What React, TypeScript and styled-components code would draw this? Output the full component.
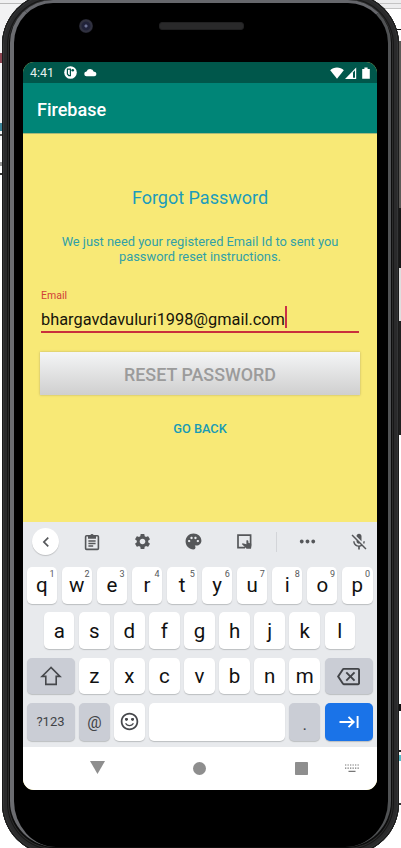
import React from 'react';
import styled, { createGlobalStyle, css } from 'styled-components';
import {
  MdSettings,
  MdPalette,
  MdMoreHoriz,
  MdMicOff,
  MdOutlineBackspace,
  MdSentimentSatisfiedAlt,
  MdChevronLeft,
} from 'react-icons/md';

const GlobalStyle = createGlobalStyle`
  * { box-sizing: border-box; }
  html, body { margin: 0; padding: 0; height: 100%; overflow: hidden; background: #fff; }
  body { font-family: Roboto, "Liberation Sans", sans-serif; }
`;

const Desktop = styled.main`
  position: relative;
  width: 401px;
  height: 848px;
  overflow: hidden;
  background: linear-gradient(#f0f0f1 0 3px, #b9b9b9 3px 4px, #f2f2f3 4px 100%) 0 0 / 200px 140px no-repeat,
    linear-gradient(#ededee 0 3px, #c4c4c4 3px 4px, #ededee 4px 8px, #c4c4c4 8px 9px, #fff 9px) 201px 0 / 200px 140px no-repeat,
    #fff;
`;

const SideButton = styled.span<{ $top: number; $height: number; $tone: string }>`
  position: absolute;
  right: 0;
  width: 4px;
  top: ${(p) => p.$top}px;
  height: ${(p) => p.$height}px;
  background: ${(p) => p.$tone};
`;

const EdgeMark = styled.span<{ $top: number; $height: number; $tone: string }>`
  position: absolute;
  left: 0;
  width: 6px;
  top: ${(p) => p.$top}px;
  height: ${(p) => p.$height}px;
  background: ${(p) => p.$tone};
`;

const Shell = styled.div`
  position: relative;
  width: 397px;
  height: 862px;
  margin: -7px 0 0 2px;
  padding: 7px 8px 8px;
  border-radius: 52px;
  background: #0c0c0c;
  box-shadow: inset 0 0 0 1px #1b1b1b, inset 0 0 0 2px #343536, inset 0 0 0 5px #2a2a2b,
    inset 0 0 0 6px #171717, inset 0 0 0 7px #2c2c2c;
`;

const Glass = styled.div`
  height: 100%;
  border-style: solid;
  border-width: 3px 3px 0 4px;
  border-color: #66676c #505254 #000 #6b6c70;
  border-radius: 43px 43px 46px 46px;
  background: #000;
  padding: 0 11px 0 9px;
  display: flex;
  flex-direction: column;
`;

const Forehead = styled.div`
  height: 59px;
  flex: none;
  display: flex;
  align-items: flex-start;
  padding: 16px 0 0 56px;
`;

const Camera = styled.span`
  width: 14px;
  height: 14px;
  border-radius: 50%;
  background: radial-gradient(circle, #6c7295 0 1px, #202239 2px 4px, #30313f 5px 6px, #1d1d27 7px);
`;

const Speaker = styled.span`
  width: 85px;
  height: 8px;
  margin: 3px 0 0 66px;
  border-radius: 3px;
  background: #29292a;
  border: 1px solid #202021;
`;

const Screen = styled.section`
  width: 354px;
  height: 728px;
  flex: none;
  border-radius: 11px;
  overflow: hidden;
  display: flex;
  flex-direction: column;
  background: #f8e976;
`;

const StatusBar = styled.header`
  height: 21px;
  flex: none;
  display: flex;
  align-items: center;
  padding: 0 7px 0 7px;
  background: #00574b;
  color: #fff;
`;

const Clock = styled.time`
  font-size: 12.5px;
  width: 34px;
  color: #e6efed;
  line-height: 21px;
`;

const StatusGlyph = styled.svg<{ $gap?: number }>`
  display: block;
  flex: none;
  margin-left: ${(p) => p.$gap ?? 0}px;
`;

const Spacer = styled.span`
  flex: 1;
`;

const AppBar = styled.div`
  height: 51px;
  flex: none;
  display: flex;
  align-items: center;
  padding: 3px 14px 0;
  background: #008577;
  border-bottom: 1px solid #a8b878;
  color: #fff;
  font-size: 18px;
  font-weight: 500;
`;

const Form = styled.form`
  height: 388px;
  flex: none;
  display: flex;
  flex-direction: column;
  padding: 53px 17px 0;
`;

const Title = styled.h1`
  margin: 0;
  font-size: 18px;
  line-height: 22px;
  font-weight: 400;
  text-align: center;
  color: #1c9cbb;
`;

const Hint = styled.p`
  margin: 25px 0 0;
  font-size: 12.85px;
  line-height: 15px;
  text-align: center;
  color: #30a0a8;
`;

const Label = styled.label`
  margin: 25px 0 0 1px;
  font-size: 10.5px;
  line-height: 13px;
  color: #d04038;
`;

const Field = styled.div`
  height: 31px;
  margin: 0 1px;
  display: flex;
  align-items: center;
  border-bottom: 2px solid #c9303c;
  font-size: 16.35px;
  line-height: 22px;
  padding-top: 7px;
  color: #16140a;
`;

const Caret = styled.span`
  width: 2px;
  height: 22px;
  margin-top: -6px;
  background: #cb3047;
`;

const ResetButton = styled.button`
  height: 43px;
  margin: 19px 0 0;
  padding: 1px 0 0;
  border: 0;
  background: linear-gradient(#f4f5f6, #cfcfcf);
  box-shadow: 0 0 2px 0 rgba(140, 130, 90, 0.6);
  font: 500 17.9px Roboto, sans-serif;
  color: #9b9b9b;
`;

const BackLink = styled.a`
  margin-top: 26px;
  font-size: 12.8px;
  line-height: 16px;
  font-weight: 500;
  text-align: center;
  color: #189bb4;
`;

const Keyboard = styled.div`
  height: 225px;
  flex: none;
  display: flex;
  flex-direction: column;
  background: #e8eaed;
  padding: 0 4.5px 0 3.5px;
`;

const Toolbar = styled.div`
  height: 39px;
  flex: none;
  margin-bottom: 6px;
  display: grid;
  grid-template-columns: 38px 54px 48px 54px 47px 17px 45px 1fr;
  align-items: center;
  justify-items: center;
  color: #55575a;
  svg { display: block; }
  > :last-child { justify-self: end; margin-right: 4px; }
`;

const Collapse = styled.span`
  width: 27px;
  height: 27px;
  border-radius: 50%;
  background: #fff;
  box-shadow: 0 1px 1px rgba(0, 0, 0, 0.18);
  display: flex;
  align-items: center;
  justify-content: center;
`;

const Divider = styled.span`
  width: 1px;
  height: 20px;
  background: #d3d5d9;
`;

const KeyRow = styled.div<{ $inset?: number; $height?: number }>`
  display: flex;
  flex: none;
  gap: 4.6px;
  height: ${(p) => p.$height ?? 36.5}px;
  margin-bottom: 8.9px;
  padding: 0 ${(p) => p.$inset ?? 0}px;
`;

const tones = {
  light: css`background: #fff; color: #111;`,
  grey: css`background: #cacdd5; color: #414347;`,
  blue: css`background: #1a73e8; color: #fff;`,
};

const Key = styled.span<{ $tone?: keyof typeof tones; $w?: number; $size?: number; $drop?: number }>`
  position: relative;
  flex: ${(p) => (p.$w ? `0 0 ${p.$w}px` : '1 1 0')};
  border-radius: 5px;
  display: flex;
  align-items: center;
  justify-content: center;
  padding-top: ${(p) => p.$drop ?? 0}px;
  font-size: ${(p) => p.$size ?? 20.5}px;
  line-height: 24px;
  box-shadow: 0 1px 1px rgba(60, 64, 67, 0.26);
  ${(p) => tones[p.$tone ?? 'light']}
  svg { display: block; }
`;

const Digit = styled.sup`
  position: absolute;
  top: 2px;
  right: 2.5px;
  font-size: 9px;
  line-height: 10px;
  color: #55575a;
`;

const NavBar = styled.nav`
  height: 43px;
  flex: none;
  display: flex;
  align-items: center;
  padding-left: 67px;
  background: #fff;
`;

const NavIcon = styled.svg<{ $gap?: number; $lift?: number }>`
  display: block;
  flex: none;
  margin-left: ${(p) => p.$gap ?? 0}px;
  margin-bottom: ${(p) => p.$lift ?? 0}px;
`;

const top = 'qwertyuiop'.split('');
const home = 'asdfghjkl'.split('');
const bottom = 'zxcvbnm'.split('');

const ClipboardIcon = () => (
  <svg width="16" height="18" viewBox="0 0 16 18">
    <rect x="1.6" y="2.8" width="12.8" height="13.6" rx="1" fill="none" stroke="currentColor" strokeWidth="1.6" />
    <path d="M4 2.2h2.3a1.8 1.8 0 0 1 3.4 0H12v3.6H4z" fill="currentColor" />
    <path d="M4.4 8h7.2M4.4 10.5h7.2M4.4 13h4.8" stroke="currentColor" strokeWidth="1.3" />
  </svg>
);

const HandwritingIcon = () => (
  <svg width="17" height="17" viewBox="0 0 17 17">
    <path d="M9 14.6H2V2.2h12.6v9" fill="none" stroke="currentColor" strokeWidth="1.7" />
    <path
      d="M10.4 7.6c.9-.6 2 0 2 1v1.2l2.2.6c.7.2 1.1.8 1 1.5l-.6 3.9h-4.4L5.8 11l.9-.8 3.7 1.1z"
      fill="currentColor"
    />
  </svg>
);

const ShiftIcon = () => (
  <svg width="22" height="20" viewBox="0 0 22 20">
    <path d="M11 1.5 2 10.4h3.8v8h10.4v-8H20z" fill="none" stroke="#46484c" strokeWidth="1.6" />
  </svg>
);

const TabIcon = () => (
  <svg width="20" height="14" viewBox="0 0 20 14" fill="none" stroke="currentColor" strokeWidth="1.9">
    <path d="M.5 7h14M9.5 1.8 14.7 7 9.5 12.2M18.6 1v12" />
  </svg>
);

export default function App() {
  return (
    <>
      <GlobalStyle />
      <Desktop>
        <EdgeMark $top={53} $height={10} $tone="#8a4450" />
        <EdgeMark $top={123} $height={8} $tone="#3c8498" />
        <EdgeMark $top={134} $height={2} $tone="#555" />
        <EdgeMark $top={162} $height={4} $tone="#999" />
        <EdgeMark $top={173} $height={2} $tone="#333" />
        <SideButton $top={29} $height={1} $tone="#111" />
        <SideButton $top={41} $height={167} $tone="#5b5956" />
        <SideButton $top={208} $height={60} $tone="#181818" />
        <SideButton $top={268} $height={53} $tone="#dedede" />
        <SideButton $top={321} $height={114} $tone="#202020" />
        <SideButton $top={704} $height={7} $tone="#111" />
        <SideButton $top={750} $height={2} $tone="#222" />
        <SideButton $top={755} $height={6} $tone="#55b9c5" />
        <SideButton $top={803} $height={2} $tone="#333" />
        <Shell>
          <Glass>
            <Forehead>
              <Camera />
              <Speaker />
            </Forehead>
            <Screen>
              <StatusBar>
                <Clock>4:41</Clock>
                <StatusGlyph width="13" height="13" viewBox="0 0 13 13">
                  <circle cx="6.5" cy="6.5" r="6.3" fill="#fff" />
                  <path d="M3.4 3.2h3v6.4H4.8L3.4 8z" fill="none" stroke="#00574b" strokeWidth="1.2" />
                  <circle cx="8.7" cy="4.3" r="1.3" fill="#00574b" />
                </StatusGlyph>
                <StatusGlyph $gap={7} width="13" height="9" viewBox="0 0 13 9">
                  <path
                    d="M2.8 8.3a2.4 2.4 0 0 1-.3-4.8A3.9 3.9 0 0 1 9.8 3.7 2.3 2.3 0 0 1 10.4 8.3z"
                    fill="#fff"
                  />
                </StatusGlyph>
                <Spacer />
                <StatusGlyph width="14" height="12" viewBox="0 0 14 12">
                  <path d="M7 11.7.2 3.2C3.6-.3 10.4-.3 13.8 3.2z" fill="#fff" />
                </StatusGlyph>
                <StatusGlyph $gap={1} width="12" height="12" viewBox="0 0 12 12">
                  <path d="M0 12 11.2.4V12z" fill="#fff" />
                  <path d="M8 5.4 10 3.2v7.6H8z" fill="#00574b" />
                </StatusGlyph>
                <StatusGlyph $gap={5} width="8" height="12" viewBox="0 0 8 12">
                  <path d="M.2 2H2.4V.4H5.6V2H7.8V11.8H.2z" fill="#fff" />
                </StatusGlyph>
              </StatusBar>
              <AppBar>Firebase</AppBar>
              <Form>
                <Title>Forgot Password</Title>
                <Hint>
                  We just need your registered Email Id to sent you
                  <br />
                  password reset instructions.
                </Hint>
                <Label>Email</Label>
                <Field>
                  bhargavdavuluri1998@gmail.com
                  <Caret />
                </Field>
                <ResetButton type="button">RESET PASSWORD</ResetButton>
                <BackLink>GO BACK</BackLink>
              </Form>
              <Keyboard>
                <Toolbar>
                  <Collapse>
                    <MdChevronLeft size={20} />
                  </Collapse>
                  <ClipboardIcon />
                  <MdSettings size={19} />
                  <MdPalette size={19} />
                  <HandwritingIcon />
                  <Divider />
                  <MdMoreHoriz size={23} />
                  <MdMicOff size={20} />
                </Toolbar>
                <KeyRow>
                  {top.map((letter, i) => (
                    <Key key={letter}>
                      {letter}
                      <Digit>{(i + 1) % 10}</Digit>
                    </Key>
                  ))}
                </KeyRow>
                <KeyRow $inset={17.5}>
                  {home.map((letter) => (
                    <Key key={letter}>{letter}</Key>
                  ))}
                </KeyRow>
                <KeyRow>
                  <Key $tone="grey" $w={48}>
                    <ShiftIcon />
                  </Key>
                  {bottom.map((letter) => (
                    <Key key={letter}>{letter}</Key>
                  ))}
                  <Key $tone="grey" $w={48} $drop={1}>
                    <MdOutlineBackspace size={23} />
                  </Key>
                </KeyRow>
                <KeyRow $height={37.5}>
                  <Key $tone="grey" $w={48} $size={13}>
                    ?123
                  </Key>
                  <Key $tone="grey" $w={30.5} $size={16} $drop={2}>
                    @
                  </Key>
                  <Key $w={30.5}>
                    <MdSentimentSatisfiedAlt size={21} color="#46484c" />
                  </Key>
                  <Key />
                  <Key $tone="grey" $w={30.5} $size={17} $drop={4}>
                    .
                  </Key>
                  <Key $tone="blue" $w={48}>
                    <TabIcon />
                  </Key>
                </KeyRow>
              </Keyboard>
              <NavBar>
                <NavIcon $lift={3} width="15" height="13" viewBox="0 0 15 13">
                  <path d="M0 0h15L7.5 13z" fill="#8e8e8e" />
                </NavIcon>
                <NavIcon $gap={88} $lift={1} width="13" height="13" viewBox="0 0 13 13">
                  <circle cx="6.5" cy="6.5" r="6.5" fill="#8e8e8e" />
                </NavIcon>
                <NavIcon $gap={89} width="13" height="13" viewBox="0 0 13 13">
                  <rect width="13" height="13" rx=".8" fill="#8e8e8e" />
                </NavIcon>
                <NavIcon $gap={37} width="14" height="9" viewBox="0 0 14 9" stroke="#777" strokeWidth="1.2">
                  <path d="M0 1h14M0 4.2h14" strokeDasharray="1.3 1.2" />
                  <path d="M3.5 7.4h7" />
                </NavIcon>
              </NavBar>
            </Screen>
          </Glass>
        </Shell>
      </Desktop>
    </>
  );
}
